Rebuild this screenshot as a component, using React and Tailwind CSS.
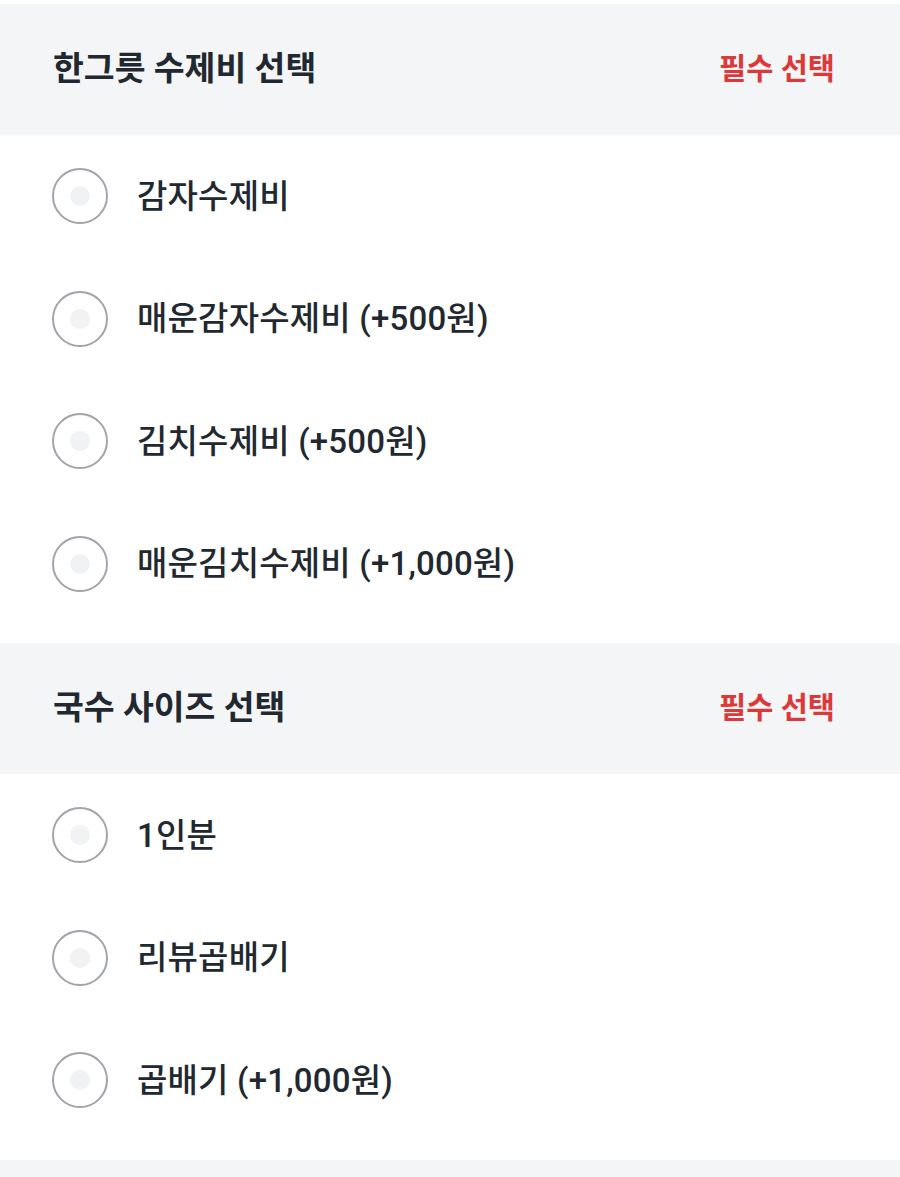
const sections = [
  {
    title: "한그릇 수제비 선택",
    options: ["감자수제비", "매운감자수제비 (+500원)", "김치수제비 (+500원)", "매운김치수제비 (+1,000원)"],
  },
  {
    title: "국수 사이즈 선택",
    options: ["1인분", "리뷰곱배기", "곱배기 (+1,000원)"],
  },
];

function Radio() {
  return (
    <span className="flex h-[56px] w-[56px] shrink-0 items-center justify-center rounded-full border-2 border-[#a0a5aa] bg-white">
      <span className="h-[20px] w-[20px] rounded-full bg-[#f1f2f4]" />
    </span>
  );
}

export default function App() {
  return (
    <div
      className="min-h-[1177px] bg-white pt-[4px] text-[#222830]"
      style={{ fontFamily: 'Roboto, "Noto Sans CJK KR", sans-serif' }}
    >
      {sections.map((section) => (
        <section key={section.title}>
          <div className="flex h-[131px] items-center justify-between bg-[#f4f5f7] pl-[53px] pr-[65px]">
            <h2 className="text-[33.5px] font-bold">{section.title}</h2>
            <span className="text-[29.5px] font-bold text-[#dc3a3a]">필수 선택</span>
          </div>
          <ul className="pb-[18px]">
            {section.options.map((opt) => (
              <li key={opt} className="flex h-[122.5px] items-center gap-[29px] pl-[52px]">
                <Radio />
                <span className="text-[33px] font-medium tracking-[0.2px]">{opt}</span>
              </li>
            ))}
          </ul>
        </section>
      ))}
      <div className="h-[20px] bg-[#f4f5f7]" />
    </div>
  );
}
